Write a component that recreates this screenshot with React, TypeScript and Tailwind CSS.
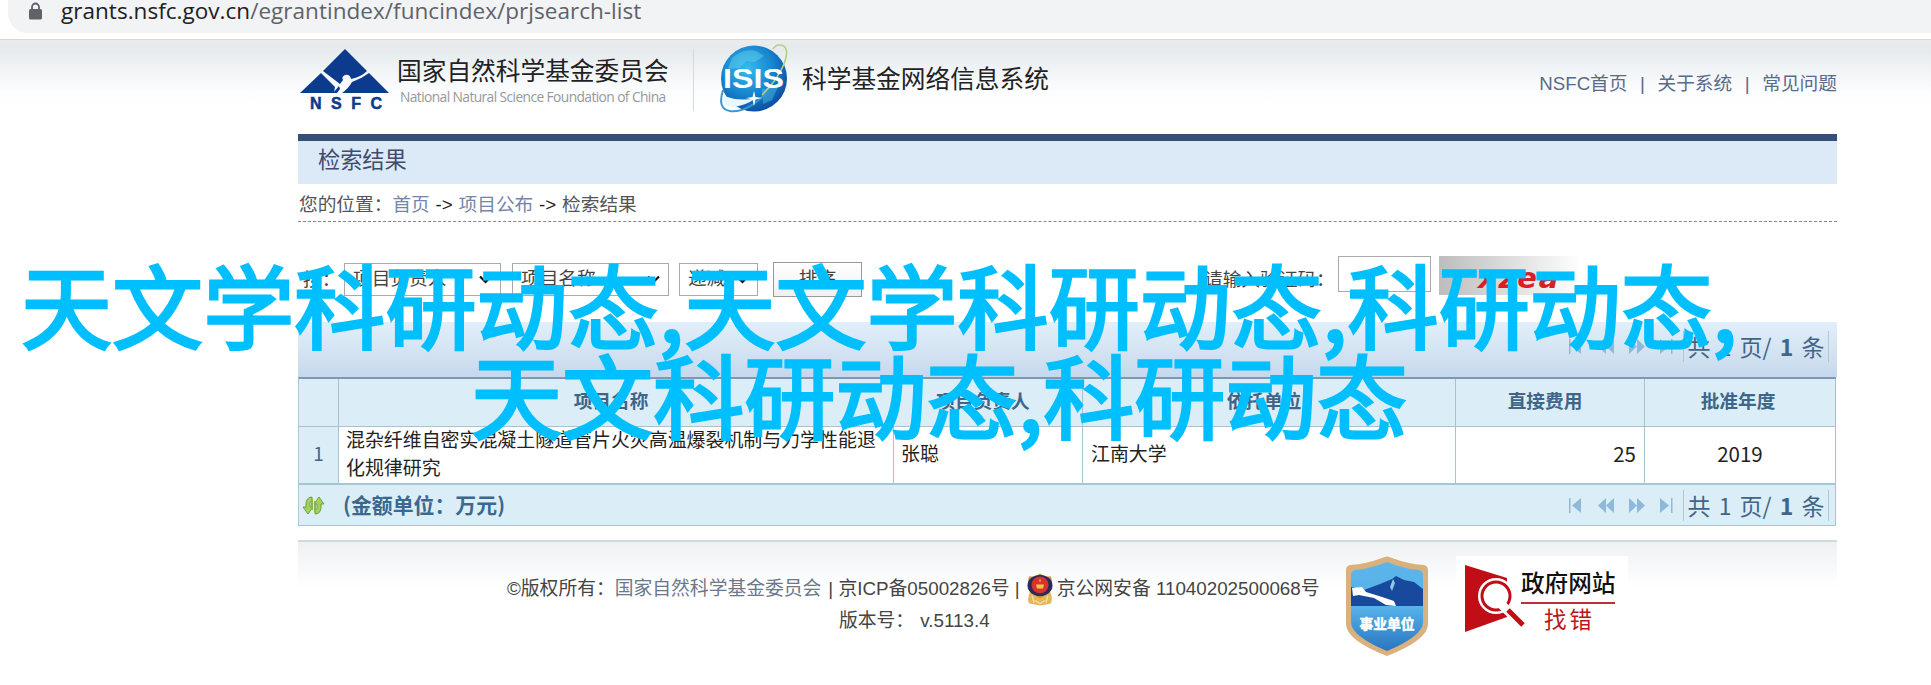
import type { ReactNode } from 'react'

const COLUMNS = 'grid grid-cols-[40px_555px_189px_373px_189px_191px]'

const HEADINGS = ['', '项目名称', '项目负责人', '依托单位', '直接费用', '批准年度']

const FILTERS = [
  { label: '项目负责人', width: 'w-[157px] mr-[11px]' },
  { label: '项目名称', width: 'w-[157px] mr-[10px]' },
  { label: '递减', width: 'w-[79px] mr-[15px]' },
]

function AddressBar() {
  return (
    <div className="mb-[6px] ml-2 flex h-[33px] items-start rounded-bl-[20px] bg-[#f1f3f4] pl-[20px]">
      <svg className="mt-[2px] h-[18px] w-[15px]" viewBox="0 0 15 18">
        <path d="M4 8V5a3.5 3.5 0 0 1 7 0v3" fill="none" stroke="#5f6368" strokeWidth="1.8" />
        <rect x="1" y="7" width="13" height="10.5" rx="1.5" fill="#5f6368" />
      </svg>
      <p className="-mt-[4px] ml-[18px] font-['Open_Sans',sans-serif] text-[22.5px] leading-[30px] tracking-[0.03px] text-[#5f6368]">
        <span className="text-[#202124]">grants.nsfc.gov.cn</span>/egrantindex/funcindex/prjsearch-list
      </p>
    </div>
  )
}

function NsfcLogo() {
  return (
    <svg className="mt-[9px] ml-[2px] h-[62px] w-[90px] shrink-0" viewBox="0 0 90 62">
      <path d="M45 0 67 22Q61 28 51 30Q50 25 45 26Q41 28 43 31L40 35 23 22Z" fill="#0c3a8c" />
      <path d="M21 24 35 38 34 44H0Z" fill="#0c3a8c" />
      <path d="M69 24 89 44H42Q48 40 52 33Q61 30 69 24Z" fill="#0c3a8c" />
      <path d="M33 44 39 37 40 40 37 44Z" fill="#0c3a8c" />
      <text
        x="10"
        y="60"
        fontFamily="Liberation Sans"
        fontWeight="700"
        fontSize="16"
        fill="#0c3a8c"
        stroke="#0c3a8c"
        strokeWidth="0.500"
        textLength="72"
      >
        NSFC
      </text>
    </svg>
  )
}

function IsisLogo() {
  return (
    <svg className="mt-[4px] ml-[26px] h-[70px] w-[70px] shrink-0" viewBox="0 0 70 70">
      <defs>
        <radialGradient id="globe" cx="40%" cy="35%" r="70%">
          <stop offset="0" stopColor="#35bdec" />
          <stop offset="0.55" stopColor="#1785cf" />
          <stop offset="1" stopColor="#0b4a9c" />
        </radialGradient>
      </defs>
      <circle cx="34" cy="34.500" r="33" fill="url(#globe)" />
      <path d="M12 14Q24 4 36 7L44 12 35 18 26 17 20 24 8 25Z" fill="#69d3f0" opacity="0.45" />
      <path d="M42 45 58 43 52 56 43 60Z" fill="#59c8ec" opacity="0.4" />
      <path d="M3 46Q-3 65 10 67Q27 69 46 49" fill="none" stroke="#3d97cd" strokeWidth="2" />
      <path d="M4 52Q3 63 13 63Q25 62 36 54Q20 58 4 52Z" fill="#e9f7fd" />
      <path d="M42 51Q58 35 64 20Q71 1 59 1Q56 1 53 5" fill="none" stroke="#b5cf83" strokeWidth="1.600" />
      <text
        x="3"
        y="44"
        fontFamily="Liberation Sans"
        fontWeight="700"
        fontSize="28"
        fill="#fff"
        textLength="61"
        lengthAdjust="spacingAndGlyphs"
      >
        ISIS
      </text>
      <path d="M34 47 35.500 53 42 54 35.500 55.500 34 62 32.500 55.500 26 54 32.500 53Z" fill="#fff" />
    </svg>
  )
}

function Header() {
  return (
    <header className="h-[95px] border-t border-[#d5d7d8] bg-[linear-gradient(180deg,#eaebec_0,#e6ebee_12px,#f1f4f6_30px,#fcfdfe_52px,#fff_70px)]">
      <div className="ml-[298px] flex w-[1539px] items-start">
        <NsfcLogo />
        <div className="mt-[14px] ml-[7px] w-[272px] shrink-0 whitespace-nowrap">
          <p className="text-[24.7px] leading-[36px] text-[#222]">国家自然科学基金委员会</p>
          <p className="-mt-[1px] ml-[3px] font-['Open_Sans',sans-serif] text-[13.8px] leading-[16px] tracking-[-0.6px] text-[#999]">
            National Natural Science Foundation of China
          </p>
        </div>
        <div className="mt-[9px] ml-[24px] h-[62px] w-px bg-[#d5dade]" />
        <IsisLogo />
        <p className="mt-[22px] ml-[12px] text-[24.7px] leading-[36px] text-[#222]">科学基金网络信息系统</p>
        <nav className="mt-[30px] ml-auto flex text-[18.7px] leading-[28px] whitespace-nowrap text-[#596a8a]">
          <a>NSFC首页</a>
          <span className="w-[30px] text-center">|</span>
          <a>关于系统</a>
          <span className="w-[30px] text-center">|</span>
          <a>常见问题</a>
        </nav>
      </div>
    </header>
  )
}

function Filters() {
  return (
    <div className="flex h-[100px] items-start pt-[34px] text-[18.7px] text-[#444]">
      <span className="mt-[10px] ml-[5px] w-[41px] shrink-0 leading-[28px]">按：</span>
      {FILTERS.map(({ label, width }) => (
        <div
          key={label}
          className={`${width} mt-[7px] flex h-[33px] shrink-0 items-center justify-between border border-[#aaa] bg-white pr-[8px] pl-[8px]`}
        >
          <span className="whitespace-nowrap">{label}</span>
          <svg className="h-[9px] w-[13px]" viewBox="0 0 13 9">
            <path d="M1 1.500 6.500 7 12 1.500" fill="none" stroke="#111" strokeWidth="2.200" />
          </svg>
        </div>
      ))}
      <button className="mt-[6px] h-[35px] w-[89px] shrink-0 border border-[#999] bg-gradient-to-b from-white to-[#f0f0f2]">
        排序
      </button>
      <span className="mt-[10px] ml-[342px] w-[134px] shrink-0 leading-[28px] whitespace-nowrap">
        请输入验证码：
      </span>
      <div className="h-[36px] w-[93px] shrink-0 border border-[#aaa] bg-white" />
      <div className="ml-[8px] h-[39px] w-[142px] shrink-0 bg-gradient-to-r from-[#bdbdbd] to-white pl-[39px]">
        <span className="block font-['DejaVu_Sans'] text-[29px] leading-[44px] font-bold tracking-[1.8px] text-[#dc1e24] italic">
          xzea
        </span>
      </div>
    </div>
  )
}

function PagerIcon({ d, bar }: { d: string; bar?: number }) {
  return (
    <svg className="h-[15px] w-[17px]" viewBox="0 0 17 15" fill="#8fb9d9">
      <path d={d} />
      {bar !== undefined && <rect x={bar} y="0" width="1.500" height="15" />}
    </svg>
  )
}

function Pager() {
  return (
    <div className="ml-auto flex items-center text-[23px] leading-[30px] text-[#3f6688]">
      <div className="flex gap-[14px] pr-[6px]">
        <PagerIcon d="M14 0V15L5 7.500Z" bar={2} />
        <PagerIcon d="M8 0V15L0 7.500ZM16 0V15L8 7.500Z" />
        <PagerIcon d="M0 0V15L8 7.500ZM8 0V15L16 7.500Z" />
        <PagerIcon d="M0 0V15L9 7.500Z" bar={11} />
      </div>
      <div className="flex h-[31px] w-[146px] items-center justify-center border-x border-[#b5c5d2] [word-spacing:3px] whitespace-nowrap">
        <p>
          共 1 页/ <b>1</b> 条
        </p>
      </div>
    </div>
  )
}

function Cell({ className = '', children }: { className?: string; children: ReactNode }) {
  return (
    <div className={`flex items-center border-r border-[#a9c2cf] ${className}`}>
      <p className="-translate-y-[2px]">{children}</p>
    </div>
  )
}

function Results() {
  return (
    <section className="w-[1539px]">
      <div className="flex h-[55px] items-center bg-[linear-gradient(180deg,#e1effa,#d5e4f3_50%,#c5d8ec)] pr-[8px] pb-[7px]">
        <Pager />
      </div>
      <div className="mr-px border-t-2 border-l border-t-[#7c99af] border-l-[#a6c9d8]">
        <div className={`${COLUMNS} h-[48px] border-b border-[#a9c2cf] bg-[#dbeef7]`}>
          {HEADINGS.map((heading) => (
            <Cell
              key={heading}
              className="justify-center pr-[10px] text-[18.7px] font-bold text-[#3f6688] last:pr-[4px]"
            >
              {heading}
            </Cell>
          ))}
        </div>
        <div className={`${COLUMNS} h-[56px] text-[18.93px] leading-[28px] text-[#222]`}>
          <Cell className="justify-center bg-[#dbeef7] text-[#3f6688]">1</Cell>
          <Cell className="pl-[7px] whitespace-nowrap">
            混杂纤维自密实混凝土隧道管片火灾高温爆裂机制与力学性能退
            <br />
            化规律研究
          </Cell>
          <Cell className="pl-[7px]">张聪</Cell>
          <Cell className="pl-[8px]">江南大学</Cell>
          <Cell className="justify-end pr-[8px] text-[20.5px]">25</Cell>
          <Cell className="justify-center text-[20.5px]">2019</Cell>
        </div>
        <div className="flex h-[43px] items-center border-t-2 border-r border-b border-[#a3c7d2] bg-[#dbeef7] pr-[6px]">
          <svg
            className="ml-[3px] h-[19px] w-[23px]"
            viewBox="0 0 23 19"
            stroke="#5c9130"
            strokeWidth="0.800"
            fill="#a5d05c"
          >
            <path d="M10 1Q3 1 4 11H1L6 18 11 11H8Q7 6 10 4Z" />
            <path d="M13 18Q20 18 19 8H22L17 1 12 8H15Q16 13 13 15Z" />
            <path d="M10 3V14M13 5V16" stroke="#86b949" strokeWidth="2" />
          </svg>
          <span className="ml-[18px] text-[20.9px] font-bold text-[#3a688e]">(金额单位：万元)</span>
          <Pager />
        </div>
      </div>
    </section>
  )
}

function PoliceBadge() {
  return (
    <svg className="mr-[3px] ml-[6px] h-[33px] w-[28px]" viewBox="0 0 28 32">
      <path d="M4 18Q1 26 3 30L9 31 14 32 20 31 25 30Q27 24 24 18Z" fill="#e5b65c" />
      <path d="M9 27 14 30 19 27M6 22 8 29M22 22 20 29" fill="none" stroke="#f7dda0" strokeWidth="1.400" />
      <path d="M14 0 19 3H25Q28 13 23 20L14 25 5 20Q0 13 3 3H9Z" fill="#c9924a" />
      <ellipse cx="14" cy="12" rx="12.500" ry="10.500" fill="#2b2a5e" />
      <circle cx="14" cy="11.500" r="8.500" fill="#d9332b" />
      <path d="M10 11H18L17 15H11ZM14 5 15 8H13Z" fill="#f5c44e" />
    </svg>
  )
}

function InstitutionShield() {
  return (
    <svg className="mt-[14px] h-[100px] w-[82px]" viewBox="0 0 82 100">
      <defs>
        <linearGradient id="shield" x1="0" y1="0" x2="0" y2="1">
          <stop offset="0" stopColor="#5cb5ea" />
          <stop offset="0.5" stopColor="#57b2e8" />
          <stop offset="1" stopColor="#2876bf" />
        </linearGradient>
      </defs>
      <path
        d="M4 9Q20 8 36 2Q41-1 46 2Q62 8 78 9Q82 10 82 14V68Q82 84 41 100Q0 84 0 68V14Q0 10 4 9Z"
        fill="#d8b17f"
      />
      <path d="M9 14Q23 13 41 6Q59 13 73 14Q77 15 77 19V66Q77 80 41 95Q5 80 5 66V19Q5 15 9 14Z" fill="url(#shield)" />
      <path d="M5 31 18 34 34 28 46 23 50 20 58 24 68 26 77 33V50H5Z" fill="#174a9c" />
      <path d="M6 32 16 31 20 36 36 41 48 45 50 50 40 49 28 42 13 39 7 40Z" fill="#fff" />
      <path d="M44 31 47 23 49 27 46 35Z" fill="#8ec8ea" />
      <text
        x="41"
        y="73"
        textAnchor="middle"
        fontFamily="Noto Sans CJK SC"
        fontWeight="700"
        fontSize="13.800"
        fill="#fff"
        stroke="#fff"
        strokeWidth="0.500"
      >
        事业单位
      </text>
    </svg>
  )
}

function ErrorReport() {
  return (
    <div className="mt-[14px] ml-[28px] flex h-[84px] w-[172px] bg-white pl-[9px]">
      <svg className="mt-[9px] h-[67px] w-[60px]" viewBox="0 0 60 67">
        <path d="M0 0 42 13V52L0 67Z" fill="#c00d16" />
        <circle cx="31" cy="31" r="18" fill="#fff" />
        <circle cx="31" cy="31" r="14" fill="#fff" stroke="#c00d16" strokeWidth="3" />
        <path d="M37 40 59 62" stroke="#fff" strokeWidth="9" />
        <path d="M43 45 58 60" stroke="#c00d16" strokeWidth="5" />
      </svg>
      <div className="mt-[11px] -ml-[4px] flex flex-col items-center whitespace-nowrap">
        <p className="w-[94px] border-b-2 border-[#b83339] text-[23.6px] leading-[35px] font-medium text-[#111]">
          政府网站
        </p>
        <p className="pl-[3px] text-[22.5px] leading-[34px] tracking-[3px] text-[#b81620]">找错</p>
      </div>
    </div>
  )
}

function Footer() {
  return (
    <footer className="mt-[14px] flex h-[144px] w-[1539px] items-start border-t-2 border-[#d0dadd] bg-[linear-gradient(180deg,#eef1f3,#fff_46px)]">
      <div className="mt-[30px] ml-[209px] w-[815px] shrink-0 text-[18.8px] whitespace-nowrap text-[#444]">
        <p className="flex h-[34px] items-center">
          ©版权所有：<a className="mr-[7px] text-[#6a788c]">国家自然科学基金委员会</a>| 京ICP备05002826号 |
          <PoliceBadge />
          京公网安备 11040202500068号
        </p>
        <p className="ml-[332px] leading-[30px] whitespace-pre">
          版本号： <span className="ml-[1px]">v.5113.4</span>
        </p>
      </div>
      <div className="ml-[24px] flex shrink-0">
        <InstitutionShield />
        <ErrorReport />
      </div>
    </footer>
  )
}

export default function App() {
  return (
    <div className="relative h-[685px] w-[1931px] overflow-hidden bg-white font-['Liberation_Sans','Noto_Sans_CJK_SC',sans-serif]">
      <AddressBar />
      <Header />
      <main className="ml-[298px] w-[1539px]">
        <h1 className="h-[50px] border-t-[7px] border-[#354f79] bg-[#dce9f6] pl-[20px] text-[22.2px] leading-[39px] text-[#3f4c70]">
          检索结果
        </h1>
        <p className="flex h-[38px] items-center border-b border-dashed border-[#888] pt-[6px] pl-[1px] text-[18.7px] whitespace-pre text-[#555]">
          您的位置：<a className="text-[#7486a8]">首页</a>
          <span className="px-[5.8px] text-[#222]">-&gt;</span>
          <a className="text-[#7486a8]">项目公布</a>
          <span className="px-[5.8px] text-[#222]">-&gt;</span>检索结果
        </p>
        <Filters />
        <div className="font-['Noto_Sans_CJK_SC',sans-serif]">
          <Results />
        </div>
        <Footer />
      </main>
      <div className="absolute top-[257px] left-[21px] font-['Noto_Sans_CJK_SC',sans-serif] text-[91px] leading-[90px] tracking-[0.12px] whitespace-nowrap text-[#00bfff] [-webkit-text-stroke:2.8px_#00bfff]">
        <p>天文学科研动态,天文学科研动态,科研动态,</p>
        <p className="pl-[450px]">天文科研动态,科研动态</p>
      </div>
    </div>
  )
}
